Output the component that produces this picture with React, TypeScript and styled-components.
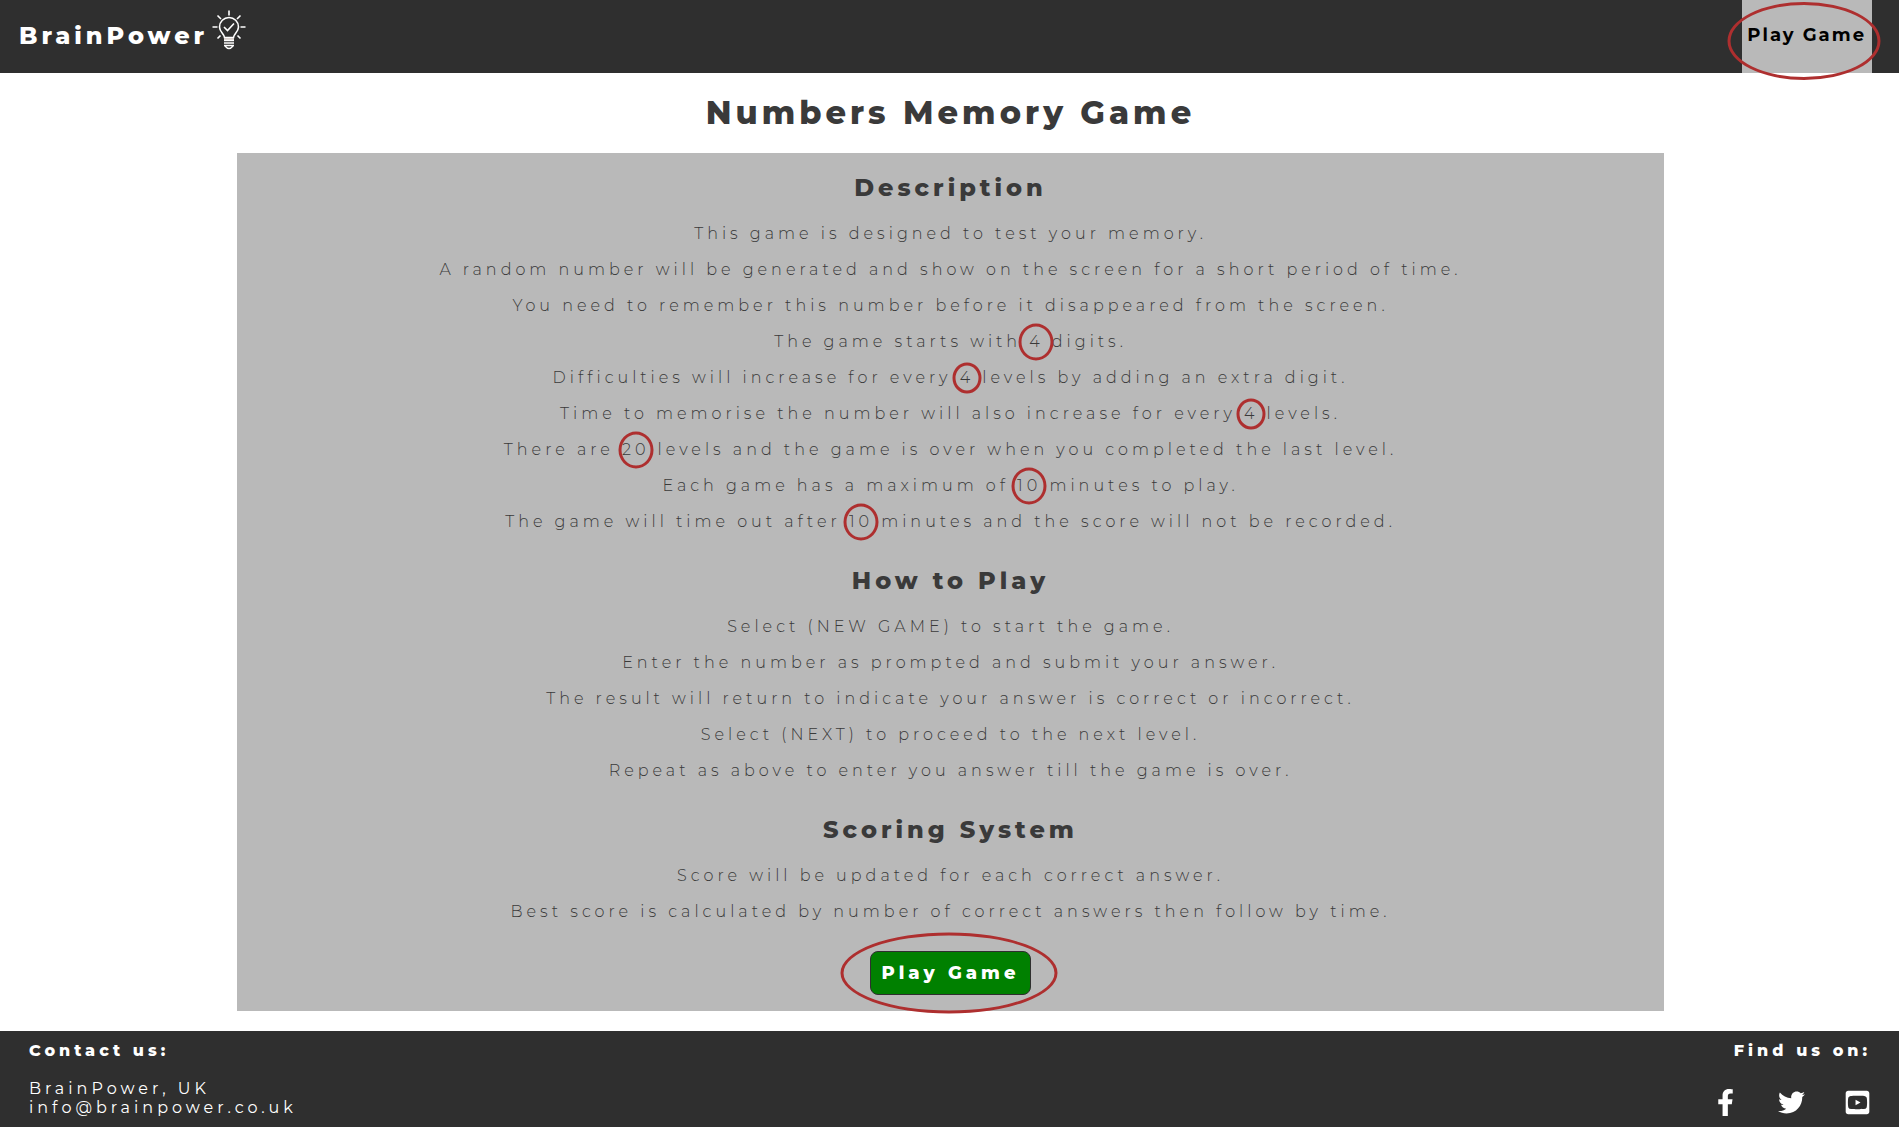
import React from 'react';
import styled, { createGlobalStyle } from 'styled-components';
import { FaFacebookF, FaTwitter, FaYoutubeSquare } from 'react-icons/fa';

const Global = createGlobalStyle`
  * { box-sizing: border-box; }
  body {
    margin: 0;
    background: #fff;
    color: #3a3a3a;
    font-family: Montserrat, Inter, "Open Sans", sans-serif;
    font-size: 16px;
    line-height: 20px;
    letter-spacing: 4px;
  }
`;

const Page = styled.div`
  display: flex;
  flex-direction: column;
  min-height: 100vh;
`;
const Header = styled.header`
  display: flex;
  justify-content: space-between;
  align-items: stretch;
  height: 73px;
  padding: 0 27px 0 19px;
  background: #2f2f2f;
`;
const Brand = styled.a`
  display: flex;
  gap: 4px;
  padding-top: 10px;
  color: #fff;
  font-size: 24px;
  font-weight: 800;
  line-height: 51px;
  text-decoration: none;
`;
const Bulb = styled.svg`
  width: 34px;
  height: 40px;
`;
const NavLink = styled.a`
  position: relative;
  padding: 0 6px 0 5px;
  background: #b9b9b9;
  color: #000;
  font-size: 18px;
  font-weight: 700;
  line-height: 70px;
  letter-spacing: 2px;
  text-decoration: none;
`;
const Main = styled.main`
  flex: 1;
  display: flex;
  flex-direction: column;
  align-items: center;
  padding: 20px 0 20px 2px;
`;
const Title = styled.h1`
  margin: 0 0 20px;
  font-size: 32px;
  font-weight: 800;
  line-height: 40px;
`;
const Panel = styled.div`
  display: flex;
  flex-direction: column;
  align-items: center;
  width: 75.2%;
  padding: 20px 0 16px;
  background: #b9b9b9;
  text-align: center;
`;
const Section = styled.section`
  margin-bottom: 18px;
  &:last-of-type { margin-bottom: 13px; }
`;
const Heading = styled.h2`
  margin: 0 0 21px;
  font-size: 24px;
  font-weight: 800;
  line-height: 30px;
`;
const Line = styled.p`
  margin: 0 0 16px;
  font-weight: 350;
`;
const Ring = styled.span<{ $w: number; $h: number; $dx?: number; $dy?: number }>`
  position: absolute;
  top: calc(50% + ${p => p.$dy ?? 0}px);
  left: calc(50% + ${p => p.$dx ?? 0}px);
  width: ${p => p.$w}px;
  height: ${p => p.$h}px;
  border: 3px solid #ae2f2f;
  border-radius: 50%;
  transform: translate(-50%, -50%);
  pointer-events: none;
`;
const Marked = styled.span`
  position: relative;
`;
const PlayButton = styled.button`
  position: relative;
  height: 44px;
  padding: 0 10px;
  border: 1px solid #2f2f2f;
  border-radius: 8px;
  background: #008000;
  color: #fff;
  font: inherit;
  font-size: 18px;
  font-weight: 800;
  letter-spacing: 4px;
`;
const Footer = styled.footer`
  display: flex;
  justify-content: space-between;
  padding: 10px 28px 10px 29px;
  background: #2f2f2f;
  color: #fff;
`;
const FooterTitle = styled.h3`
  margin: 0 0 18px;
  font-size: 16px;
  font-weight: 800;
  line-height: 20px;
`;
const Address = styled.address`
  height: 38px;
  font-style: normal;
  line-height: 19px;
  a { color: inherit; text-decoration: none; }
`;
const Social = styled.div`
  display: flex;
  flex-direction: column;
  align-items: flex-end;
`;
const Icons = styled.div`
  display: flex;
  gap: 39px;
  padding-top: 10px;
  a { display: flex; color: #fff; }
  svg { width: auto; height: 27px; }
`;

function Num({ children, small }: { children: string; small?: boolean }) {
  return (
    <Marked>
      {children}
      <Ring $w={small ? 29 : 35} $h={small ? 31 : 37} />
    </Marked>
  );
}

export default function App() {
  return (
    <Page>
      <Global />
      <Header>
        <Brand href="#">
          BrainPower
          <Bulb viewBox="0 0 34 40" fill="none" stroke="#fff" strokeWidth="1.6">
            <path d="M17 .5v5M5.500 5.500l3.500 3.500M28.500 5.500l-3.500 3.500M.5 17h5M28.500 17h5M5.500 28.500l3-3M28.500 28.500l-3-3" />
            <path d="M12.500 27.500c0-3.500-5-5.500-5-10.500a9.500 9.500 0 0 1 19 0c0 5-5 7-5 10.500z" />
            <path d="M12 17l3.500 3.500 6.500-7" />
            <path d="M12 28h10v3h-10z" fill="#d9d0cc" stroke="none" />
            <path d="M12 30.500h10M12 33h10M12 35.500h10M13 36q4 5 8 0" strokeWidth="1.300" />
          </Bulb>
        </Brand>
        <NavLink href="#">
          Play Game
          <Ring $w={153} $h={78} $dx={-3} $dy={4} />
        </NavLink>
      </Header>
      <Main>
        <Title>Numbers Memory Game</Title>
        <Panel>
          <Section>
            <Heading>Description</Heading>
            <Line>This game is designed to test your memory.</Line>
            <Line>A random number will be generated and show on the screen for a short period of time.</Line>
            <Line>You need to remember this number before it disappeared from the screen.</Line>
            <Line>The game starts with <Num>4</Num> digits.</Line>
            <Line>Difficulties will increase for every <Num small>4</Num> levels by adding an extra digit.</Line>
            <Line>Time to memorise the number will also increase for every <Num small>4</Num> levels.</Line>
            <Line>There are <Num>20</Num> levels and the game is over when you completed the last level.</Line>
            <Line>Each game has a maximum of <Num>10</Num> minutes to play.</Line>
            <Line>The game will time out after <Num>10</Num> minutes and the score will not be recorded.</Line>
          </Section>
          <Section>
            <Heading>How to Play</Heading>
            <Line>Select (NEW GAME) to start the game.</Line>
            <Line>Enter the number as prompted and submit your answer.</Line>
            <Line>The result will return to indicate your answer is correct or incorrect.</Line>
            <Line>Select (NEXT) to proceed to the next level.</Line>
            <Line>Repeat as above to enter you answer till the game is over.</Line>
          </Section>
          <Section>
            <Heading>Scoring System</Heading>
            <Line>Score will be updated for each correct answer.</Line>
            <Line>Best score is calculated by number of correct answers then follow by time.</Line>
          </Section>
          <PlayButton type="button">
            Play Game
            <Ring $w={217} $h={81} $dx={-1} />
          </PlayButton>
        </Panel>
      </Main>
      <Footer>
        <div>
          <FooterTitle>Contact us:</FooterTitle>
          <Address>
            BrainPower, UK<br />
            <a href="mailto:info@brainpower.co.uk">info@brainpower.co.uk</a>
          </Address>
        </div>
        <Social>
          <FooterTitle>Find us on:</FooterTitle>
          <Icons>
            <a href="#" aria-label="Facebook"><FaFacebookF /></a>
            <a href="#" aria-label="Twitter"><FaTwitter /></a>
            <a href="#" aria-label="YouTube"><FaYoutubeSquare /></a>
          </Icons>
        </Social>
      </Footer>
    </Page>
  );
}
